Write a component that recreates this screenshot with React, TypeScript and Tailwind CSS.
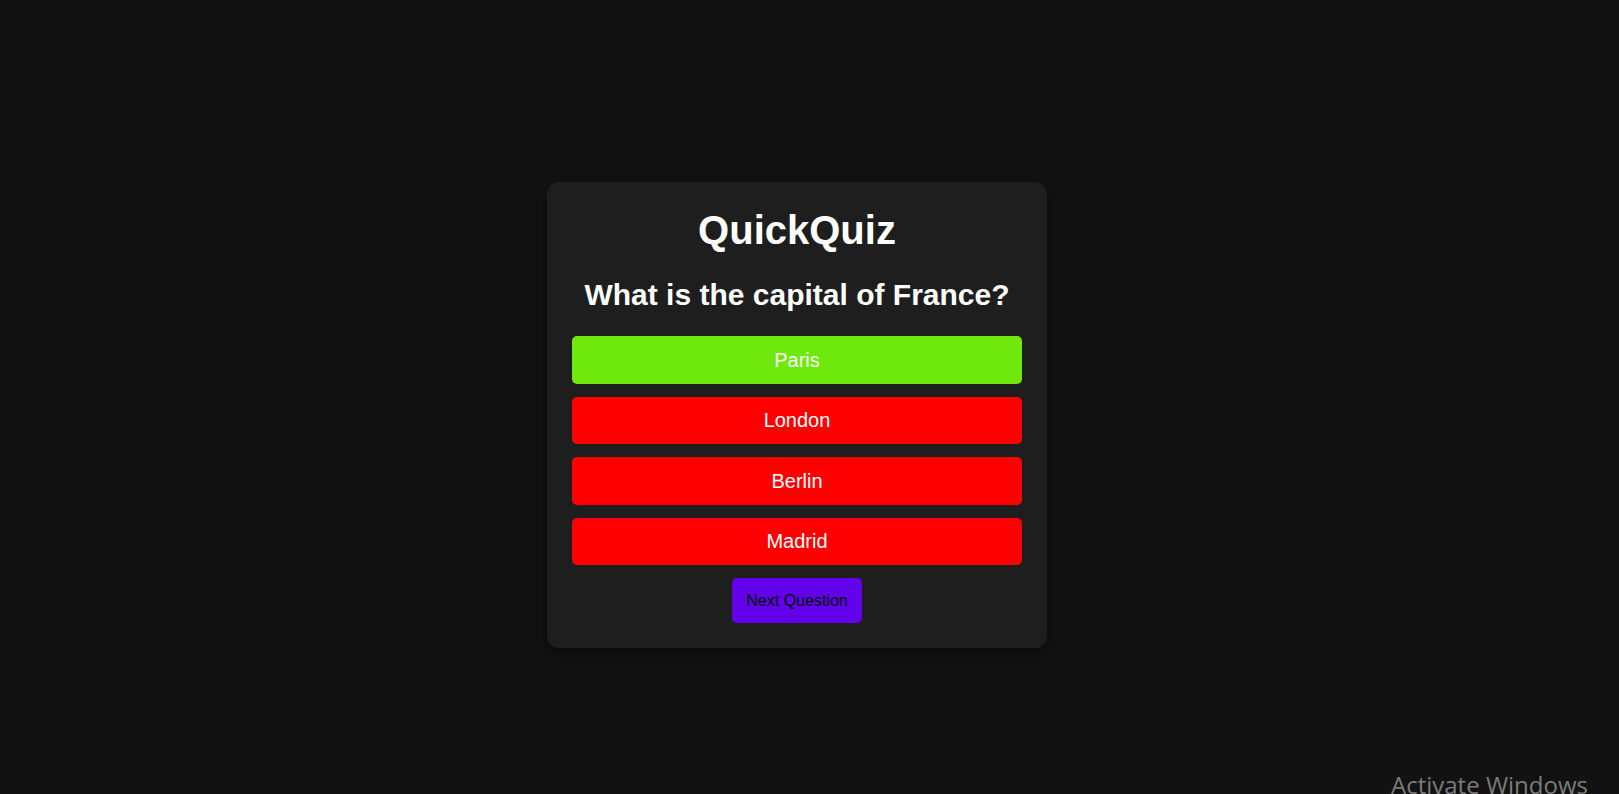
import React from "react";

const answers = [
  { text: "Paris", correct: true },
  { text: "London", correct: false },
  { text: "Berlin", correct: false },
  { text: "Madrid", correct: false },
];

export default function App() {
  return (
    <div
      className="relative w-full h-[794px] overflow-hidden bg-[#121212]"
      style={{ fontFamily: '"Liberation Sans", Arial, sans-serif' }}
    >
      <div className="flex justify-center pt-[182px] pr-[25px]">
        <div className="w-[500px] rounded-[12px] bg-[#1e1e1e] px-[25px] pt-[25px] pb-[25px] shadow-[0_5px_12px_rgba(0,0,0,0.45)] flex flex-col items-center">
          <h1 className="text-[40px] leading-[46px] font-bold text-white">QuickQuiz</h1>
          <h2 className="mt-[25px] text-[30px] leading-[34px] font-bold text-white whitespace-nowrap">
            What is the capital of France?
          </h2>
          <div className="mt-[24px] w-full flex flex-col gap-[13px]">
            {answers.map((a) => (
              <button
                key={a.text}
                className={`w-full h-[47.5px] rounded-[5px] text-[20px] text-white flex items-center justify-center ${
                  a.correct ? "bg-[#6ee90b]" : "bg-[#ff0000]"
                }`}
              >
                {a.text}
              </button>
            ))}
          </div>
          <button className="mt-[13px] w-[130px] h-[45px] rounded-[5px] bg-[#6200ea] text-black text-[16px] flex items-center justify-center">
            Next Question
          </button>
        </div>
      </div>
      <div
        className="absolute left-[1391px] top-[769px] text-[24px] leading-[32px] text-[#7b7b7b] whitespace-nowrap"
        style={{ fontFamily: '"Open Sans", "Noto Sans", sans-serif' }}
      >
        Activate Windows
      </div>
    </div>
  );
}
